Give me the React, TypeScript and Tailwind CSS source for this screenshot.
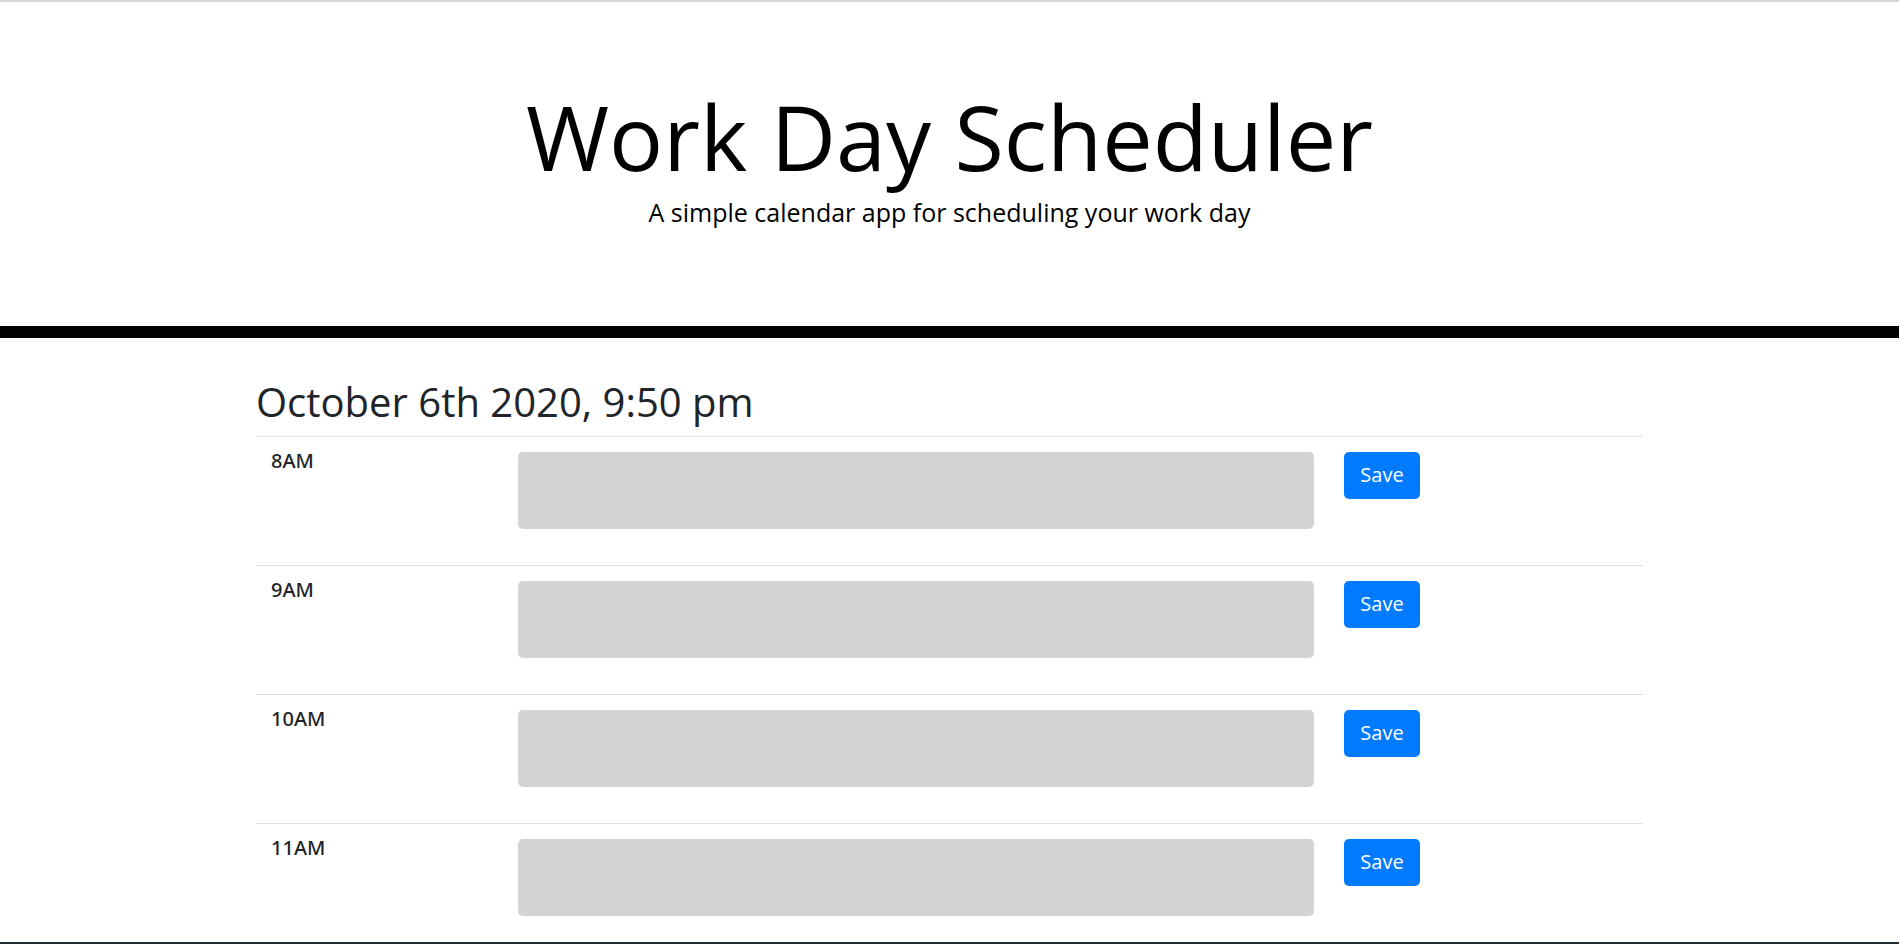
import { useState } from "react";

const hours = ["8AM", "9AM", "10AM", "11AM"];

function HourRow({ label }: { label: string }) {
    const [text, setText] = useState("");
    return (
        <div className="flex items-start h-[129px] pt-[9px] border-t border-[#dfdfdf]">
            <div className="w-[262px] pl-[15px] text-[20px] leading-[30px] font-medium font-['Noto_Sans',sans-serif] text-[#212529]">{label}</div>
            <textarea
                value={text}
                onChange={e => setText(e.target.value)}
                className="mt-[6px] w-[796px] h-[77px] bg-[#d3d3d3] rounded-[5px] resize-none outline-none p-[8px] text-[20px]"
            />
            <button className="mt-[6px] ml-[30px] w-[76px] h-[47px] bg-[#007bff] text-white text-[20px] leading-[30px] rounded-[5px]">
                Save
            </button>
        </div>
    );
}

export default function App() {
    return (
        <div className="min-h-screen bg-white font-['Open_Sans',sans-serif]">
            <div className="h-[2px] bg-[#d6d6d6]" />
            <header className="pt-[80px] pb-[94px] border-b-[12px] border-black text-center text-black">
                <h1 className="text-[90px] leading-[108px] font-normal">Work Day Scheduler</h1>
                <p className="mt-[4px] text-[25px] leading-[37.5px] font-normal">A simple calendar app for scheduling your work day</p>
            </header>

            <main className="w-[1387px] mx-auto">
                <h2 className="mt-[40px] mb-[10px] text-[40px] leading-[48px] text-[#212529]">October 6th 2020, 9:50 pm</h2>
                {hours.map(h => <HourRow key={h} label={h} />)}
            </main>

            <div className="fixed bottom-0 left-0 w-full h-[2px] bg-[#1f2a30]" />
        </div>
    );
}
